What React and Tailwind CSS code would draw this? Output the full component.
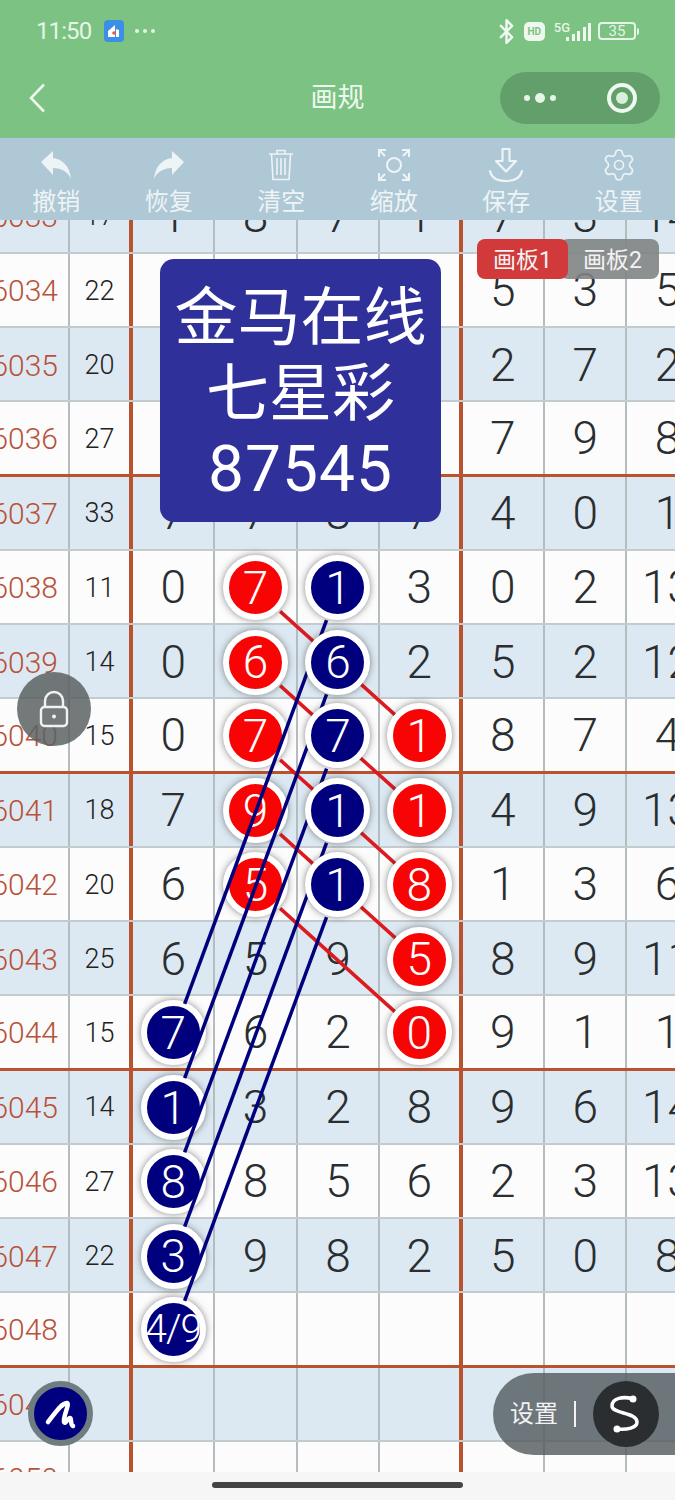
import React from "react";
import { Settings, Bluetooth } from "lucide-react";

const CJK = "font-['Roboto','Noto_Sans_CJK_SC',sans-serif]";

const ROW_H = 74.25;
const COL_W = 82.4;

// no, sum, seven digit columns
const rows = [
  ["6033", "17", ["1", "8", "7", "1", "7", "3", "14"]],
  ["6034", "22", ["", "", "", "", "5", "3", "5"]],
  ["6035", "20", ["", "", "", "", "2", "7", "2"]],
  ["6036", "27", ["", "", "", "", "7", "9", "8"]],
  ["6037", "33", ["7", "7", "8", "7", "4", "0", "1"]],
  ["6038", "11", ["0", "7", "1", "3", "0", "2", "13"]],
  ["6039", "14", ["0", "6", "6", "2", "5", "2", "12"]],
  ["6040", "15", ["0", "7", "7", "1", "8", "7", "4"]],
  ["6041", "18", ["7", "9", "1", "1", "4", "9", "13"]],
  ["6042", "20", ["6", "5", "1", "8", "1", "3", "6"]],
  ["6043", "25", ["6", "5", "9", "5", "8", "9", "11"]],
  ["6044", "15", ["7", "6", "2", "0", "9", "1", "1"]],
  ["6045", "14", ["1", "3", "2", "8", "9", "6", "14"]],
  ["6046", "27", ["8", "8", "5", "6", "2", "3", "13"]],
  ["6047", "22", ["3", "9", "8", "2", "5", "0", "8"]],
  ["6048", "", ["4/9", "", "", "", "", "", ""]],
  ["6049", "", ["", "", "", "", "", "", ""]],
  ["6050", "", ["", "", "", "", "", "", ""]],
];

// row index -> column index -> ball kind
const isBall = (r, c) => {
  if (c === 0 && r >= 11 && r <= 15) return "low";
  if (c === 1 && r >= 5 && r <= 9) return "red";
  if (c === 2 && r >= 5 && r <= 9) return "high";
  if (c === 3 && r >= 7 && r <= 11) return "red";
  return null;
};

const cx = (c) => 133 + COL_W * c + 40.2;
const cy = (r) => 38 + ROW_H * r;

// trim a line so it stops at both ball edges
const seg = (r1, c1, r2, c2) => {
  const x1 = cx(c1), y1 = cy(r1), x2 = cx(c2), y2 = cy(r2);
  const len = Math.hypot(x2 - x1, y2 - y1);
  const ux = (x2 - x1) / len, uy = (y2 - y1) / len;
  return { x1: x1 + ux * 33, y1: y1 + uy * 33, x2: x2 - ux * 33, y2: y2 - uy * 33 };
};

const redLines = [0, 1, 2, 3, 4].map((i) => seg(5 + i, 1, 7 + i, 3));
const navyLines = [0, 1, 2, 3, 4].map((i) => seg(5 + i, 2, 11 + i, 0));

function Ball({ value, kind }) {
  const color = kind === "red" ? "bg-[#f80404]" : "bg-[#00007f]";
  const layer = kind === "high" ? "z-30" : "z-10";
  const size = value.length > 1 ? "text-[39px] tracking-[-1px]" : "text-[46px]";
  return (
    <div
      className={`relative ${layer} ${color} ${size} w-[65px] h-[65px] shrink-0 rounded-full border-[6px] border-white shadow-[0_0_7px_rgba(40,40,40,0.55)] text-white font-light leading-none flex items-center justify-center`}
    >
      {value}
    </div>
  );
}

function Row({ row, index }) {
  const [no, sum, digits] = row;
  const blue = index % 2 === 0;
  const thick = index % 4 === 3;
  return (
    <div
      className={`grid grid-cols-[70px_63px_repeat(7,82.4px)] h-[74.25px] ${
        thick ? "border-b-[3px] border-[#b9532f]" : "border-b-2 border-[#c3cbce]"
      } ${blue ? "bg-[#dde9f2]" : "bg-[#fcfcfc]"}`}
    >
      <div className="border-r-2 border-[#b4bcbf] pt-[2px] flex items-center justify-end pr-[10px] text-[30px] font-light text-[#b8513a]">
        {no}
      </div>
      <div className="border-r-4 border-[#b9532f] pt-[2px] flex items-center justify-center text-[27px] font-light text-[#222]">
        {sum}
      </div>
      {digits.map((d, c) => {
        const kind = isBall(index, c);
        return (
          <div
            key={c}
            className={`pt-[2px] flex items-center justify-center whitespace-nowrap text-[46px] font-light text-[#2a2e30] ${
              c === 3 ? "border-r-4 border-[#b9532f]" : "border-r-2 border-[#b4bcbf]"
            }`}
          >
            {kind ? <Ball value={d} kind={kind} /> : d}
          </div>
        );
      })}
    </div>
  );
}

function UndoIcon({ flip }) {
  return (
    <svg
      width="36"
      height="32"
      viewBox="0 0 36 32"
      fill="#eef4f6"
      className={flip ? "-scale-x-100" : ""}
    >
      <path d="M3 13L15 2v7c10 1 17 9 18 21-3-7-9-11-18-11v7z" />
    </svg>
  );
}

function TrashIcon() {
  return (
    <svg width="36" height="36" viewBox="0 0 36 36" fill="none" stroke="#eef4f6" strokeWidth="1.6">
      <path d="M6 7h24M14 7V3.500h8V7M8.500 7l1.500 25.500h16L27.500 7M14 11v17M18 11v17M22 11v17" />
    </svg>
  );
}

function ScanIcon() {
  return (
    <svg width="36" height="36" viewBox="0 0 36 36" fill="none" stroke="#eef4f6" strokeWidth="2">
      <circle cx="18" cy="18" r="7" />
      <path d="M3 10V3h7M3 3l6 6M33 10V3h-7M33 3l-6 6M3 26v7h7M3 33l6-6M33 26v7h-7M33 33l-6-6" />
    </svg>
  );
}

function SaveIcon() {
  return (
    <svg width="36" height="36" viewBox="0 0 36 36" fill="none" stroke="#eef4f6" strokeWidth="2.200">
      <path d="M14.500 2h7v12h6.500L18 24.500 8 14h6.500z" strokeLinejoin="round" />
      <path d="M2 24c1.500 7 8 10 16 10s14.500-3 16-10" strokeLinecap="round" />
    </svg>
  );
}

const tools = [
  { label: "撤销", icon: <UndoIcon /> },
  { label: "恢复", icon: <UndoIcon flip /> },
  { label: "清空", icon: <TrashIcon /> },
  { label: "缩放", icon: <ScanIcon /> },
  { label: "保存", icon: <SaveIcon /> },
  { label: "设置", icon: <Settings size={36} strokeWidth={1.1} color="#eef4f6" /> },
];

function StatusBar() {
  return (
    <div className="h-[62px] flex items-center justify-between pl-[36px] pr-[36px] text-[#e6f5e6]">
      <div className="flex items-center">
        <span className="text-[24px] tracking-[-0.9px]">11:50</span>
        <div className="ml-[13px] w-[20px] h-[22px] rounded-[4px] bg-[#3b8fe6] flex items-center justify-center">
          <svg width="14" height="14" viewBox="0 0 14 14">
            <path d="M1 7l7-6v12H1z" fill="#fff" />
            <path d="M9 5l3 1v7H9z" fill="#fff" />
            <circle cx="7" cy="9" r="1.800" fill="#e0622d" />
          </svg>
        </div>
        <div className="ml-[11px] flex gap-[4px]">
          <span className="w-[4px] h-[4px] rounded-full bg-[#e6f5e6]" />
          <span className="w-[4px] h-[4px] rounded-full bg-[#e6f5e6]" />
          <span className="w-[4px] h-[4px] rounded-full bg-[#e6f5e6]" />
        </div>
      </div>
      <div className="flex items-center">
        <Bluetooth size={27} strokeWidth={2.2} color="#f0f8f0" />
        <div className="ml-[4px] w-[21px] h-[19px] rounded-[5px] bg-[#eef8ee] text-[#7bc283] text-[10px] font-bold flex items-center justify-center">
          HD
        </div>
        <div className="ml-[9px] flex items-end h-[20px]">
          <span className="text-[13px] leading-none self-start font-medium">5G</span>
          <div className="flex items-end gap-[2.5px] -ml-[4px]">
            <span className="w-[3px] h-[4px] bg-[#eef8ee]" />
            <span className="w-[3px] h-[7px] bg-[#eef8ee]" />
            <span className="w-[3px] h-[10px] bg-[#eef8ee]" />
            <span className="w-[3px] h-[14px] bg-[#eef8ee]" />
            <span className="w-[3px] h-[18px] bg-[#eef8ee]" />
          </div>
        </div>
        <div className="ml-[7px] w-[38px] h-[18px] rounded-[4px] border-2 border-[#e6f5e6] text-[15px] leading-none flex items-center justify-center">
          35
        </div>
        <span className="ml-[1px] w-[2px] h-[7px] rounded-r bg-[#e6f5e6]" />
      </div>
    </div>
  );
}

function NavBar() {
  return (
    <div className="h-[72px] flex items-center">
      <div className="w-[175px] pl-[29px]">
        <svg width="16" height="30" viewBox="0 0 16 30" fill="none" stroke="#eef8ee" strokeWidth="2.600">
          <path d="M15 1.500L2 15l13 13.500" />
        </svg>
      </div>
      <div className={`flex-1 text-center text-[27px] text-[#eef8ee] ${CJK}`}>画规</div>
      <div className="w-[175px] pr-[15px]">
        <div className="w-[160px] h-[52px] rounded-full bg-[#639f6b] flex items-center justify-between pl-[24px] pr-[23px]">
          <div className="flex items-center gap-[5px]">
            <span className="w-[6px] h-[6px] rounded-full bg-[#e6f5e6]" />
            <span className="w-[10px] h-[10px] rounded-full bg-[#e6f5e6]" />
            <span className="w-[6px] h-[6px] rounded-full bg-[#e6f5e6]" />
          </div>
          <div className="w-[30px] h-[30px] rounded-full border-[4px] border-[#eef8ee] flex items-center justify-center">
            <span className="w-[12px] h-[12px] rounded-full bg-[#d9eedb]" />
          </div>
        </div>
      </div>
    </div>
  );
}

export default function App() {
  return (
    <div className={`w-[675px] h-[1500px] flex flex-col overflow-hidden bg-[#f7f7f7] ${CJK}`}>
      <div className="h-[138px] shrink-0 bg-[#7bc283]">
        <StatusBar />
        <NavBar />
      </div>

      <div className="h-[82px] shrink-0 grid grid-cols-6 bg-[#aec8d5]">
        {tools.map((t) => (
          <div key={t.label} className="flex flex-col items-center pt-[9px]">
            <div className="h-[36px] flex items-center justify-center">{t.icon}</div>
            <span className="mt-[4px] text-[24px] leading-[30px] text-[#eef4f6]">{t.label}</span>
          </div>
        ))}
      </div>

      <div className="relative flex-1 overflow-hidden">
        <div className="relative -mt-[40.5px] w-[710px]">
          {rows.map((row, i) => (
            <Row key={row[0]} row={row} index={i} />
          ))}

          <svg className="absolute top-0 left-0 z-[5]" width="675" height="1340">
            {redLines.map((l, i) => (
              <line key={i} {...l} stroke="#dc1a1f" strokeWidth="3.500" />
            ))}
          </svg>
          <svg className="absolute top-0 left-0 z-20" width="675" height="1340">
            {navyLines.map((l, i) => (
              <line key={i} {...l} stroke="#00007f" strokeWidth="3.500" />
            ))}
          </svg>
        </div>

        {/* floating panels */}
        <div className="absolute z-40 top-[39px] left-[160px] w-[281px] h-[263px] pt-[6px] rounded-[14px] bg-[#30309b] text-white flex flex-col items-center justify-center">
          <div className="text-[63px] leading-[76px]">金马在线</div>
          <div className="text-[63px] leading-[76px]">七星彩</div>
          <div className="text-[64px] leading-[76px] tracking-[1px]">87545</div>
        </div>

        <div className="absolute z-40 top-[19px] left-[477px] flex text-[23px] text-[#f3f3f3]">
          <div className="relative z-10 w-[91px] h-[40px] pt-[4px] rounded-[8px] bg-[#d1393a] flex items-center justify-center">
            画板1
          </div>
          <div className="-ml-[8px] w-[99px] h-[40px] pl-[6px] pt-[4px] rounded-[8px] bg-[#808484]/90 flex items-center justify-center">
            画板2
          </div>
        </div>

        <div className="absolute z-40 top-[452px] left-[17px] w-[74px] h-[74px] rounded-full bg-[#5c6262]/85 flex items-center justify-center">
          <svg width="30" height="38" viewBox="0 0 30 38" fill="none" stroke="#f2f2f2" strokeWidth="2.400">
            <path d="M6 18v-7a9 9 0 0 1 18 0v7" />
            <rect x="2" y="17" width="26" height="19" rx="3.500" />
            <circle cx="15" cy="26.500" r="2" fill="#f2f2f2" stroke="none" />
          </svg>
        </div>

        <div className="absolute z-40 top-[1161px] left-[28px] w-[65px] h-[65px] rounded-full border-[6px] border-[#6f7c80] bg-[#00007f]">
          <svg width="53" height="53" viewBox="0 0 53 53" fill="none" stroke="#fff" strokeWidth="4.500" strokeLinecap="round" strokeLinejoin="round">
            <path d="M14 35C20 28 26 17 33 16c3 1-4 13-3 19 1 3 4-4 6-4 2 0 0 7 3 8" />
          </svg>
        </div>

        <div className="absolute z-40 top-[1153px] left-[493px] w-[182px] h-[82px] rounded-l-full bg-[#51595b]/80 flex items-center">
          <span className="ml-[17px] text-[24px] text-[#f2f2f2]">设置</span>
          <span className="ml-[16px] w-[2px] h-[26px] bg-[#f2f2f2]" />
          <div className="ml-[17px] w-[66px] h-[66px] rounded-full bg-[#2a2e30]">
            <svg width="66" height="66" viewBox="0 0 66 66" fill="none" stroke="#fff" strokeWidth="3.500">
              <path d="M40 18C30 15 19 17 19 25c0 8 25 6 25 16 0 6-10 8-20 7" />
              <circle cx="40" cy="18" r="3.500" fill="#fff" stroke="none" />
              <circle cx="24" cy="48" r="3.500" fill="#fff" stroke="none" />
            </svg>
          </div>
        </div>
      </div>

      <div className="h-[28px] shrink-0 bg-[#f6f6f6] flex justify-center pt-[10px]">
        <div className="w-[251px] h-[6px] rounded-full bg-[#444]" />
      </div>
    </div>
  );
}
